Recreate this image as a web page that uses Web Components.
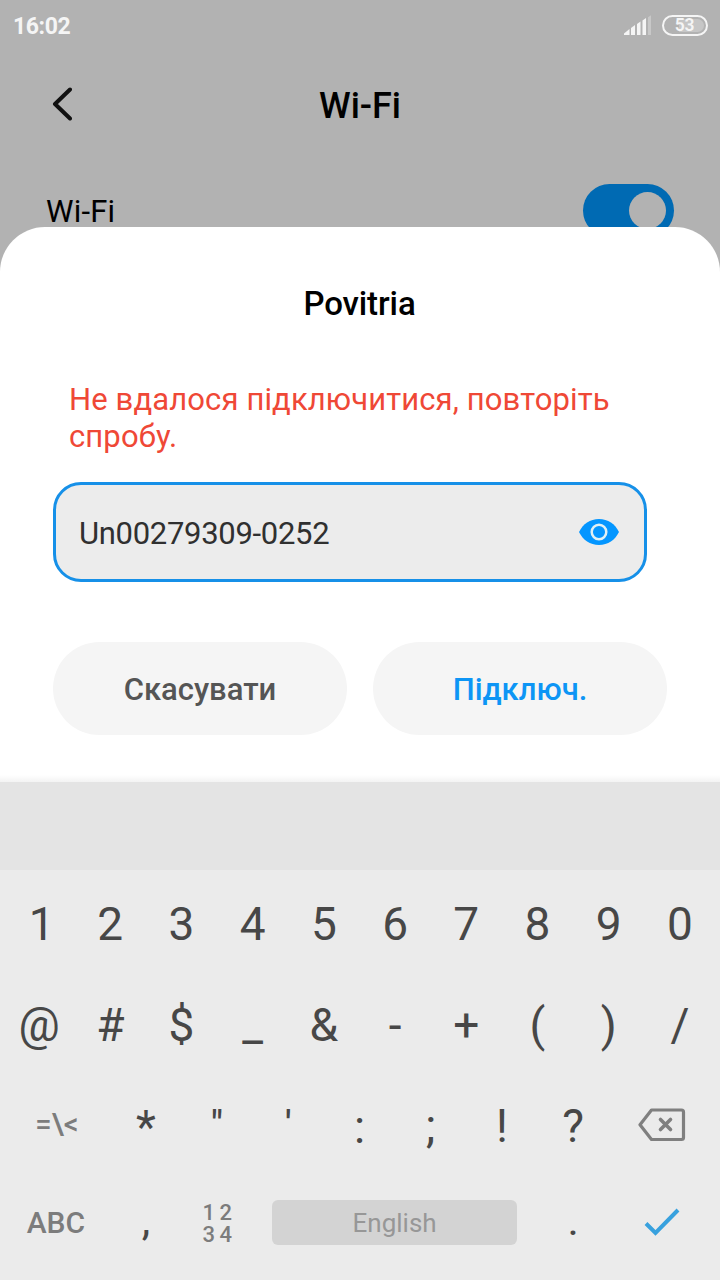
<!DOCTYPE html>
<html lang="uk">
<head>
<meta charset="utf-8">
<title>Wi-Fi</title>
<style>
html, body { margin: 0; height: 1280px; overflow: hidden; background: #b2b2b2; font-family: Roboto, "Noto Sans", sans-serif; color: #000; }
</style>
</head>
<body>
<wifi-screen></wifi-screen>
<script>
function define(name, html, setup) {
  const template = document.createElement('template');
  template.innerHTML = html;
  customElements.define(name, class extends HTMLElement {
    constructor() {
      super();
      this.attachShadow({ mode: 'open' }).append(template.content.cloneNode(true));
    }
    connectedCallback() { if (setup) setup(this, this.shadowRoot); }
  });
}

define('status-bar', `
<style>
:host { display: flex; height: 52px; box-sizing: border-box; padding: 0 12px 2px 13px; align-items: center; justify-content: space-between; color: #f5f5f5; }
.time { font-weight: 700; font-size: 23px; line-height: 48px; padding-top: 4px; letter-spacing: -0.400px; }
.right { display: flex; align-items: center; gap: 11px; }
svg { display: block; }
.battery { box-sizing: border-box; width: 46px; height: 21px; border: 2px solid #f5f5f5; border-radius: 11px; padding: 2px; }
.level { height: 13px; border-radius: 7px; background: linear-gradient(90deg, #b2b2b2 35%, #c6c6c6 35%); font-weight: 600; font-size: 17.500px; line-height: 13px; text-align: center; padding-right: 1px; letter-spacing: -0.300px; }
</style>
<span class="time">16:02</span>
<span class="right">
<svg width="27" height="20" viewBox="0 0 27 20"><g fill="#f5f5f5"><path d="M0 20V18.500L5.500 14V20Z"/><path d="M7 20V13L11 10V20Z"/><path d="M13 20V9L16.500 6.500V20Z"/><path d="M18.500 20V5.500L22 3V20Z"/></g><path d="M24 20V2.200L27.200 0V20Z" fill="#c8c8c8"/></svg>
<span class="battery"><div class="level">53</div></span>
</span>`);

define('title-bar', `
<style>
:host { display: grid; grid-template-columns: 52px 1fr 52px; height: 106px; padding: 0 52px; box-sizing: border-box; align-items: center; }
svg { display: block; margin-top: -2px; }
h1 { margin: 0; font-size: 36px; line-height: 104px; padding-top: 2px; font-weight: 500; text-align: center; }
</style>
<svg width="20" height="34" viewBox="0 0 20 34"><path d="M18 2.500L3 17L18 31.500" fill="none" stroke="#111" stroke-width="4" stroke-linecap="round" stroke-linejoin="round"/></svg>
<h1><slot></slot></h1>`);

define('toggle-switch', `
<style>
:host { display: flex; box-sizing: border-box; width: 91px; height: 53px; border-radius: 27px; background: #006ab3; padding: 8px; justify-content: flex-end; }
i { width: 37px; height: 37px; border-radius: 50%; background: #b2b2b2; }
</style><i></i>`);

define('setting-row', `
<style>
:host { display: flex; height: 69px; padding: 0 46px; box-sizing: border-box; align-items: flex-start; justify-content: space-between; font-size: 31px; }
span { line-height: 36px; padding-top: 36px; letter-spacing: 0.200px; }
toggle-switch { margin-top: 26px; }
</style><span><slot></slot></span><toggle-switch></toggle-switch>`);

define('pill-button', `
<style>
:host { display: block; flex: 1; height: 93px; border-radius: 47px; background: #f5f5f5; text-align: center; font-size: 31px; line-height: 96px; font-weight: 500; }
</style><slot></slot>`);

define('password-field', `
<style>
:host { display: flex; box-sizing: border-box; width: 594px; height: 100px; border: 3px solid #1690e8; border-radius: 28px; background: #ececec; padding: 2px 25px 0 23px; align-items: center; justify-content: space-between; font-size: 31px; letter-spacing: -0.300px; color: #303030; }
svg { display: block; margin-top: -2px; }
</style><span><slot></slot></span>
<svg width="40" height="26" viewBox="0 0 40 26"><path d="M0 13C4 5 11 0 20 0S36 5 40 13C36 21 29 26 20 26S4 21 0 13Z" fill="#0496ff"/><circle cx="20" cy="13" r="7.300" fill="none" stroke="#e0f0f4" stroke-width="2.500"/></svg>`);

define('connect-sheet', `
<style>
:host { display: flex; flex-direction: column; position: relative; box-sizing: border-box; height: 555px; padding: 57px 53px 0; border-radius: 45px 45px 0 0; background: linear-gradient(#fff 548px, #f3f3f3 555px); }
h2 { margin: 0 1px 0 0; text-align: center; font-size: 33px; line-height: 39px; font-weight: 500; letter-spacing: -0.100px; }
p { margin: 58px 0 0; padding-left: 16px; font-size: 31px; line-height: 37px; letter-spacing: 0.120px; color: #ef4836; }
password-field { margin-top: 27px; }
.actions { display: flex; gap: 26px; margin-top: 60px; }
.cancel { color: #555; }
.connect { color: #0d95f5; }
</style>
<h2>Povitria</h2>
<p>Не вдалося підключитися, повторіть<br>спробу.</p>
<password-field>Un00279309-0252</password-field>
<div class="actions"><pill-button class="cancel">Скасувати</pill-button><pill-button class="connect">Підключ.</pill-button></div>`);

define('key-cap', `
<style>
:host { display: flex; align-items: center; justify-content: center; grid-column: span 2; font-size: 46px; line-height: 54px; color: #474747; white-space: pre; }
:host([wide]) { grid-column: span 3; }
:host([soft]) { color: #7c7c7c; font-weight: 500; }
</style><slot></slot>`);

define('key-space', `
<style>
:host { display: block; grid-column: span 8; align-self: center; height: 45px; margin: 0 20px 0 19px; border-radius: 6px; background: #d3d3d3; color: #979797; font-size: 26px; line-height: 46px; text-align: center; }
</style><slot></slot>`);

define('soft-keyboard', `
<style>
:host { display: block; position: relative; height: 498px; background: #ebebeb; }
.suggest { height: 88px; margin-bottom: 4px; background: #e4e4e4; }
.row { display: grid; grid-template-columns: repeat(20, 1fr); height: 101px; padding: 0 4.500px 0 3.500px; }
.plain key-cap { padding-bottom: 2px; }
.first key-cap:first-child { padding-left: 5px; }
.last { height: 90px; }
.sym { font-size: 29px; padding-bottom: 6px; }
.abc { font-size: 30px; padding: 1px 2px 0 0; }
.num { font-size: 22px; line-height: 22.500px; letter-spacing: 4.500px; padding: 4px 0 0 5px; box-sizing: border-box; }
.quote { font-size: 36px; padding-bottom: 5px; font-weight: 500; }
.mark { padding-bottom: 2px; }
.punct { font-size: 43px; padding-bottom: 5px; }
svg { display: block; }
.del { padding-bottom: 4px; }
</style>
<div class="suggest"></div>
<div class="row plain first" data-keys="1234567890"></div>
<div class="row plain" data-keys="@#$_&amp;-+()/"></div>
<div class="row"><key-cap wide soft class="sym">=\\&lt;</key-cap><key-cap>*</key-cap><key-cap class="quote">"</key-cap><key-cap class="quote">'</key-cap><key-cap>:</key-cap><key-cap class="mark">;</key-cap><key-cap class="mark">!</key-cap><key-cap class="mark">?</key-cap><key-cap wide class="del"><svg width="48" height="34" viewBox="0 0 48 34" fill="none" stroke="#7f7f7f" stroke-width="3.200" stroke-linecap="round" stroke-linejoin="round"><path d="M13.500 2H43.500Q45.500 2 45.500 4V29.500Q45.500 31.500 43.500 31.500H13.500L2 16.700Z"/><path d="M22.500 11.500L32.500 21.500M32.500 11.500L22.500 21.500" stroke-width="3.600"/></svg></key-cap></div>
<div class="row last"><key-cap wide soft class="abc">ABC</key-cap><key-cap class="punct">,</key-cap><key-cap soft class="num">12<br>34</key-cap><key-space>English</key-space><key-cap class="punct">.</key-cap><key-cap wide><svg width="36" height="28" viewBox="0 0 36 28"><path d="M2 15.500L11.500 25L34 2" fill="none" stroke="#38a1de" stroke-width="4"/></svg></key-cap></div>`,
(host, root) => {
  root.querySelectorAll('[data-keys]').forEach(row => {
    if (row.childElementCount) return;
    for (const ch of row.dataset.keys) {
      const key = document.createElement('key-cap');
      key.textContent = ch;
      row.append(key);
    }
  });
});

define('wifi-screen', `
<style>:host { display: flex; flex-direction: column; width: 720px; height: 1280px; overflow: hidden; background: #b2b2b2; }</style>
<status-bar></status-bar>
<title-bar>Wi-Fi</title-bar>
<setting-row>Wi-Fi</setting-row>
<connect-sheet></connect-sheet>
<soft-keyboard></soft-keyboard>`);
</script>
</body>
</html>
